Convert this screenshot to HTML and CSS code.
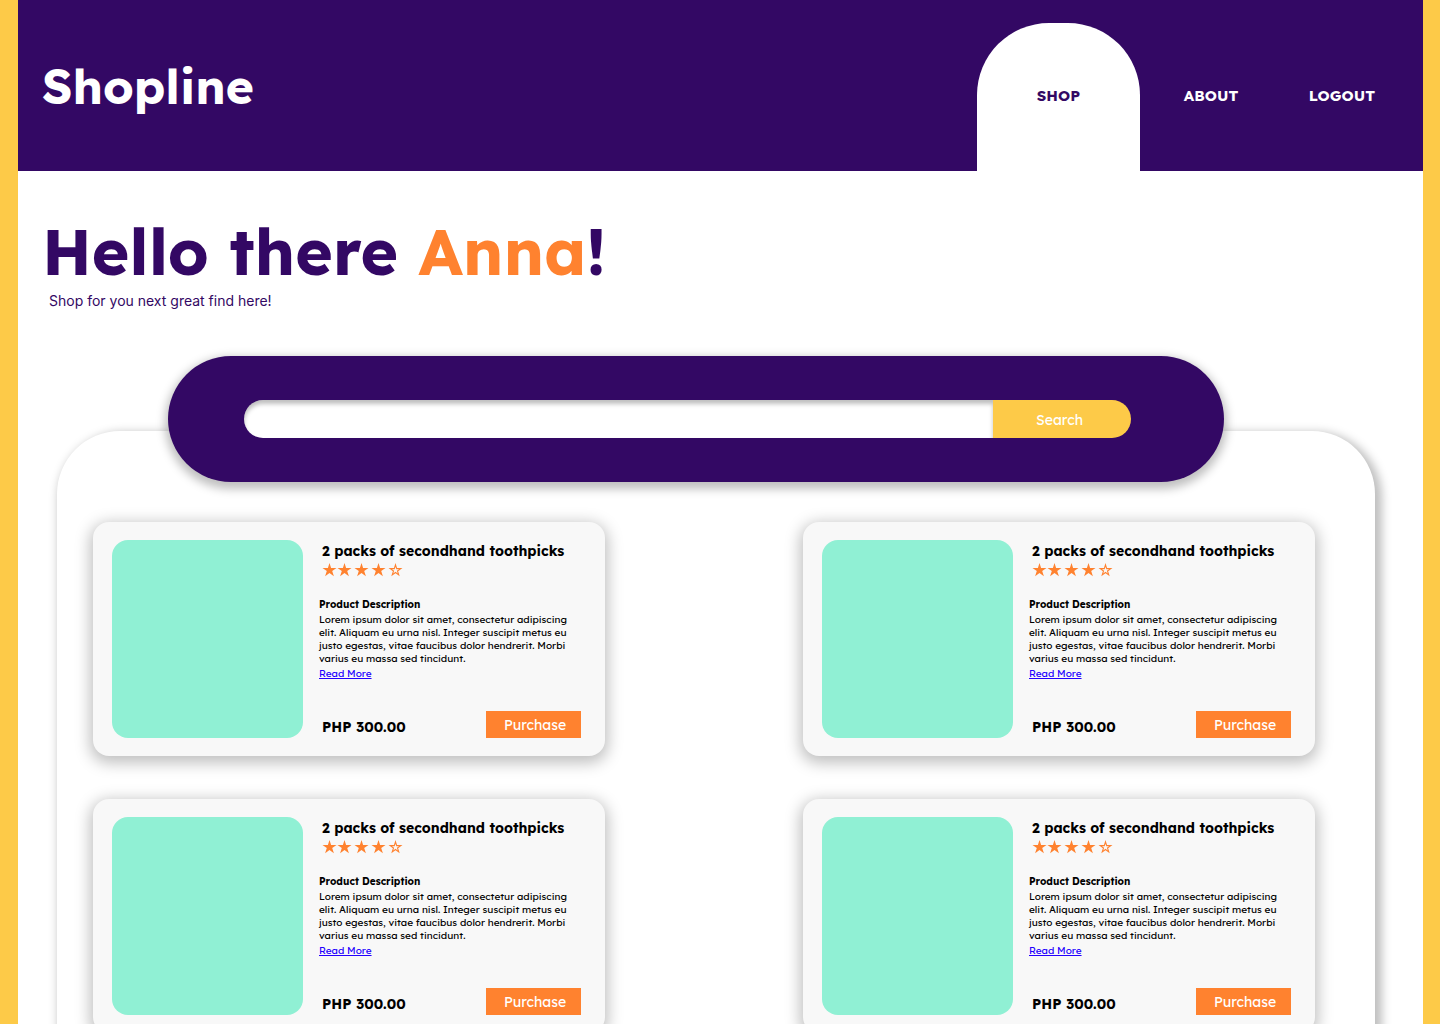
FILE: index.html
```html
<!DOCTYPE html>
<html lang="en">
<head>
<meta charset="utf-8">
<title>Shopline</title>
<link rel="stylesheet" href="styles.css">
</head>
<body>
<svg class="sprite" aria-hidden="true">
  <defs>
    <path id="star" d="M7 0 8.600 5H14L9.700 8.100 11.400 13.300 7 10.100 2.600 13.300 4.300 8.100 0 5H5.400Z"/>
    <g id="rating" fill="#ff822f">
      <use href="#star" x="0.500"/>
      <use href="#star" x="15.500"/>
      <use href="#star" x="32.500"/>
      <use href="#star" x="49.500"/>
      <path fill="none" stroke="#ff822f" stroke-width="1.100" d="M73.500 1.800 74.700 5.600H78.800L75.500 8 76.700 11.900 73.500 9.500 70.300 11.900 71.500 8 68.200 5.600H72.300Z"/>
    </g>
  </defs>
</svg>
<header class="header">
  <a class="logo" href="#">Shopline</a>
  <nav class="nav">
    <a class="tab active" href="#">SHOP</a>
    <a class="tab about" href="#">ABOUT</a>
    <a class="tab logout" href="#">LOGOUT</a>
  </nav>
</header>
<main class="main">
  <h1 class="greeting">Hello there <span class="name">Anna</span>!</h1>
  <p class="tagline">Shop for you next great find here!</p>
  <form class="search">
    <input class="search-input" type="text" aria-label="Search products">
    <button class="search-button" type="button">Search</button>
  </form>
  <section class="panel">
    <article class="card">
      <div class="photo"></div>
      <div class="info">
        <h2 class="title">2 packs of secondhand toothpicks</h2>
        <svg class="stars" width="84" height="14" role="img" aria-label="4 out of 5 stars"><use href="#rating"/></svg>
        <h3 class="subtitle">Product Description</h3>
        <p class="text">Lorem ipsum dolor sit amet, consectetur adipiscing elit. Aliquam eu urna nisl. Integer suscipit metus eu justo egestas, vitae faucibus dolor hendrerit. Morbi varius eu massa sed tincidunt.</p>
        <a class="more" href="#">Read More</a>
        <div class="buy"><span class="price">PHP 300.00</span><button class="purchase" type="button">Purchase</button></div>
      </div>
    </article>
    <article class="card">
      <div class="photo"></div>
      <div class="info">
        <h2 class="title">2 packs of secondhand toothpicks</h2>
        <svg class="stars" width="84" height="14" role="img" aria-label="4 out of 5 stars"><use href="#rating"/></svg>
        <h3 class="subtitle">Product Description</h3>
        <p class="text">Lorem ipsum dolor sit amet, consectetur adipiscing elit. Aliquam eu urna nisl. Integer suscipit metus eu justo egestas, vitae faucibus dolor hendrerit. Morbi varius eu massa sed tincidunt.</p>
        <a class="more" href="#">Read More</a>
        <div class="buy"><span class="price">PHP 300.00</span><button class="purchase" type="button">Purchase</button></div>
      </div>
    </article>
    <article class="card">
      <div class="photo"></div>
      <div class="info">
        <h2 class="title">2 packs of secondhand toothpicks</h2>
        <svg class="stars" width="84" height="14" role="img" aria-label="4 out of 5 stars"><use href="#rating"/></svg>
        <h3 class="subtitle">Product Description</h3>
        <p class="text">Lorem ipsum dolor sit amet, consectetur adipiscing elit. Aliquam eu urna nisl. Integer suscipit metus eu justo egestas, vitae faucibus dolor hendrerit. Morbi varius eu massa sed tincidunt.</p>
        <a class="more" href="#">Read More</a>
        <div class="buy"><span class="price">PHP 300.00</span><button class="purchase" type="button">Purchase</button></div>
      </div>
    </article>
    <article class="card">
      <div class="photo"></div>
      <div class="info">
        <h2 class="title">2 packs of secondhand toothpicks</h2>
        <svg class="stars" width="84" height="14" role="img" aria-label="4 out of 5 stars"><use href="#rating"/></svg>
        <h3 class="subtitle">Product Description</h3>
        <p class="text">Lorem ipsum dolor sit amet, consectetur adipiscing elit. Aliquam eu urna nisl. Integer suscipit metus eu justo egestas, vitae faucibus dolor hendrerit. Morbi varius eu massa sed tincidunt.</p>
        <a class="more" href="#">Read More</a>
        <div class="buy"><span class="price">PHP 300.00</span><button class="purchase" type="button">Purchase</button></div>
      </div>
    </article>
  </section>
</main>
</body>
</html>
```
FILE: styles.css
```css
* { box-sizing: border-box; }

body {
  margin: 0;
  border-left: 18px solid #fdca48;
  border-right: 17px solid #fdca48;
  background: #fff;
  color: #000;
  font-family: Lexend, Inter, sans-serif;
}

h1, h2, h3, p { margin: 0; }
a { text-decoration: none; }
button, input { border: 0; padding: 0; font-family: inherit; }

.sprite { position: absolute; width: 0; height: 0; }

.header {
  display: flex;
  justify-content: space-between;
  height: 171px;
  padding: 0 48px 0 24px;
  background: #330864;
}

.logo {
  margin-top: 56px;
  color: #fff;
  font-size: 48px;
  font-weight: 700;
  line-height: 60px;
}

.nav { display: flex; padding-top: 23px; }

.tab {
  display: flex;
  align-items: center;
  justify-content: center;
  padding-bottom: 4px;
  color: #fff;
  font-size: 15px;
  font-weight: 700;
}

.about { width: 142px; }
.logout { width: 93px; justify-content: flex-end; }

.active {
  width: 163px;
  border-radius: 72px 72px 0 0;
  background: #fff;
  color: #330864;
}

.main { padding: 40px 48px 0 39px; }

.greeting {
  margin: 0 0 2px -15px;
  color: #330864;
  font-size: 64px;
  font-weight: 700;
  line-height: 80px;
}

.name { color: #ff822f; }

.tagline {
  margin-left: -8px;
  color: #330864;
  font-family: Inter, sans-serif;
  font-size: 14px;
  line-height: 16px;
}

.search {
  position: relative;
  display: flex;
  margin: 47px 151px -51px 111px;
  padding: 44px 93px 44px 76px;
  border-radius: 63px;
  background: #330864;
  box-shadow: 0 4px 10px 3px rgba(0, 0, 0, 0.25);
}

.search-input {
  flex: 1;
  min-width: 0;
  height: 38px;
  padding: 0 18px;
  border-radius: 19px 0 0 19px;
  background: #fff;
  box-shadow: inset 0 4px 4px rgba(0, 0, 0, 0.25);
  font-size: 14px;
}

.search-button {
  width: 138px;
  height: 38px;
  padding: 2px 5px 0 0;
  border-radius: 0 19px 19px 0;
  background: #fdca48;
  color: #fff;
  font-size: 14px;
}

.panel {
  display: grid;
  grid-template-columns: 512px 512px;
  justify-content: space-between;
  row-gap: 43px;
  padding: 91px 60px 43px 36px;
  border-radius: 63px 63px 0 0;
  background: #fff;
  box-shadow: 4px 4px 10px 3px rgba(0, 0, 0, 0.25);
}

.card {
  display: flex;
  gap: 16px;
  padding: 18px 24px 18px 19px;
  border-radius: 16px;
  background: #f8f8f8;
  box-shadow: 0 4px 15px 3px rgba(0, 0, 0, 0.25);
}

.photo {
  flex: none;
  width: 191px;
  height: 198px;
  border-radius: 16px;
  background: #90f0d4;
}

.info {
  flex: 1;
  display: flex;
  flex-direction: column;
  align-items: flex-start;
  padding-top: 2px;
}

.title {
  padding-left: 3px;
  font-size: 14px;
  font-weight: 700;
  line-height: 18px;
  white-space: nowrap;
}

.stars { margin: 3px 0 21px 3px; }

.subtitle {
  margin-bottom: 2px;
  font-size: 10px;
  font-weight: 700;
  line-height: 13px;
}

.text {
  margin-bottom: 2px;
  font-size: 10px;
  line-height: 13px;
}

.more {
  color: #2400ff;
  font-size: 10px;
  line-height: 13px;
  text-decoration: underline;
}

.buy {
  align-self: stretch;
  display: flex;
  align-items: flex-end;
  justify-content: space-between;
  margin-top: auto;
  padding-left: 3px;
}

.price {
  font-size: 14px;
  font-weight: 700;
  line-height: 22px;
}

.purchase {
  width: 95px;
  height: 27px;
  padding-left: 3px;
  background: #ff822f;
  color: #fff;
  font-size: 14px;
}
```
